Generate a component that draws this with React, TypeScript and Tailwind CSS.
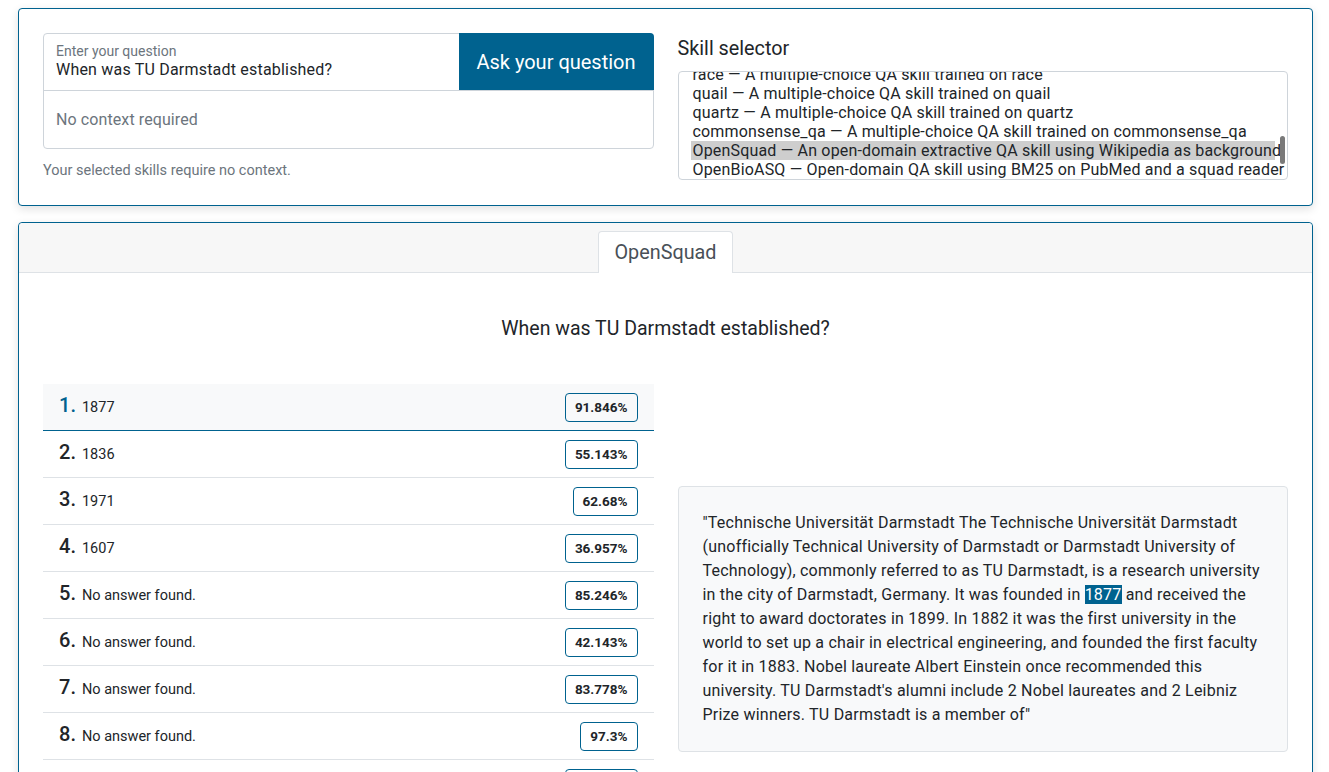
import React from 'react';

const skills = [
  { name: 'race', desc: 'A multiple-choice QA skill trained on race' },
  { name: 'quail', desc: 'A multiple-choice QA skill trained on quail' },
  { name: 'quartz', desc: 'A multiple-choice QA skill trained on quartz' },
  { name: 'commonsense_qa', desc: 'A multiple-choice QA skill trained on commonsense_qa' },
  { name: 'OpenSquad', desc: 'An open-domain extractive QA skill using Wikipedia as background', selected: true },
  { name: 'OpenBioASQ', desc: 'Open-domain QA skill using BM25 on PubMed and a squad reader' },
];

const answers = [
  { text: '1877', score: '91.846%' },
  { text: '1836', score: '55.143%' },
  { text: '1971', score: '62.68%' },
  { text: '1607', score: '36.957%' },
  { text: 'No answer found.', score: '85.246%' },
  { text: 'No answer found.', score: '42.143%' },
  { text: 'No answer found.', score: '83.778%' },
  { text: 'No answer found.', score: '97.3%' },
  { text: 'No answer found.', score: '58.421%' },
  { text: 'No answer found.', score: '71.05%' },
];

export default function App() {
  return (
    <div className="min-h-screen bg-white pl-[18px] pr-[16px] pt-2 pb-6 flex flex-col gap-4 text-[#212529]" style={{ fontFamily: 'Roboto, "Liberation Sans", sans-serif' }}>
      {/* question card */}
      <div className="border border-[#00628f] rounded-[4px] bg-white shadow-[0_3px_10px_rgba(0,0,0,0.12)] pt-6 px-6 pb-[25px]">
        <div className="grid grid-cols-2 gap-6">
          <div>
            <div className="border border-[#ced4da] rounded-[4px]">
              <div className="flex h-[57px] border-b border-[#ced4da]">
                <div className="flex-1 px-3 pt-[9px]">
                  <div className="text-[14px] leading-[16px] text-[#6c757d]">Enter your question</div>
                  <div className="text-[16px] leading-[22px] tracking-[0.2px] text-[#212529]">When was TU Darmstadt established?</div>
                </div>
                <button className="w-[195px] -mt-px -mr-px bg-[#00628f] text-white text-[20px] rounded-tr-[4px]">
                  Ask your question
                </button>
              </div>
              <div className="h-[57px] px-3 flex items-center text-[16px] tracking-[0.1px] text-[#6c757d]">No context required</div>
            </div>
            <p className="mt-[13px] text-[14.5px] leading-[18px] text-[#6c757d]">Your selected skills require no context.</p>
          </div>

          <div>
            <div className="text-[19.8px] leading-[24px] mt-[4px] mb-[10px]">Skill selector</div>
            <div className="relative h-[109px] border border-[#ced4da] rounded-[4px] overflow-hidden px-3">
              <div className="-mt-[7px] text-[16px] leading-[19px] tracking-[0.18px] text-[#212529]">
                {skills.map((s) => (
                  <div key={s.name} className={`px-[2px] whitespace-nowrap ${s.selected ? 'bg-[#cecece]' : ''}`}>
                    {s.name} — {s.desc}
                  </div>
                ))}
              </div>
              <div className="absolute right-[2px] top-[64px] w-[5px] h-[28px] rounded-full bg-[#7a7a7a]" />
            </div>
          </div>
        </div>
      </div>

      {/* results card */}
      <div className="border border-[#00628f] rounded-[4px] bg-white shadow-[0_3px_10px_rgba(0,0,0,0.12)]">
        <div className="bg-[#f7f7f7] border-b border-[#dee2e6] flex justify-center pt-2 rounded-t-[4px] h-[50px]">
          <div className="bg-white border border-[#dee2e6] border-b-0 rounded-t-[4px] px-4 flex items-center text-[19.8px] text-[#495057] -mb-px">
            OpenSquad
          </div>
        </div>
        <div className="px-6 pt-[44px] pb-6">
          <h2 className="text-center text-[19.5px] leading-[24px] mb-[43px]">When was TU Darmstadt established?</h2>
          <div className="grid grid-cols-2 gap-6 items-center">
            <div>
              {answers.map((a, i) => (
                <div
                  key={i}
                  className={`h-[47px] flex items-center justify-between pl-4 pr-4 border-b ${i === 0 ? 'bg-[#f8f9fa] border-[#00628f]' : 'border-[#dee2e6]'}`}
                >
                  <div className="flex items-baseline -mt-[4px]">
                    <span className={`text-[20px] font-medium mr-[6px] ${i === 0 ? 'text-[#00628f]' : 'text-[#212529]'}`}>{i + 1}.</span>
                    <span className="text-[14.5px]">{a.text}</span>
                  </div>
                  <span className="border border-[#00628f] rounded-[4px] h-[29px] px-[9px] flex items-center text-[13.5px] font-bold text-[#212529]">
                    {a.score}
                  </span>
                </div>
              ))}
            </div>
            <div className="bg-[#f8f9fa] border border-[#dee2e6] rounded-[4px] p-6 text-[16px] leading-[24px] tracking-[0.22px]">
              "Technische Universität Darmstadt The Technische Universität Darmstadt (unofficially Technical University of Darmstadt or Darmstadt University of Technology), commonly referred to as TU Darmstadt, is a research university in the city of Darmstadt, Germany. It was founded in{' '}
              <span className="bg-[#00628f] text-white">1877</span> and received the right to award doctorates in 1899. In 1882 it was the first university in the world to set up a chair in electrical engineering, and founded the first faculty for it in 1883. Nobel laureate Albert Einstein once recommended this university. TU Darmstadt's alumni include 2 Nobel laureates and 2 Leibniz Prize winners. TU Darmstadt is a member of"
            </div>
          </div>
        </div>
      </div>
    </div>
  );
}
